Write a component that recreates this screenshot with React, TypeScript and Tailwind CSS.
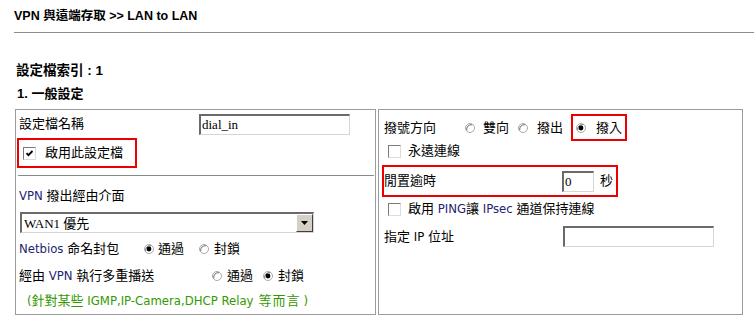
import React from 'react';

const Radio = ({ checked = false }: { checked?: boolean }) => (
  <svg width="10" height="10" viewBox="0 0 10 10" className="shrink-0">
    <circle cx="5" cy="5" r="4.5" fill="#fff" stroke="#a8a8a8" />
    <path d="M1.8 7.2 A4.5 4.5 0 0 1 7.2 1.8" fill="none" stroke="#707070" />
    {checked && <circle cx="5" cy="5" r="2.4" fill="#000" />}
  </svg>
);

const Checkbox = ({ checked = false }: { checked?: boolean }) => (
  <div className="w-[13px] h-[13px] shrink-0 bg-white border border-t-[#7a7a7a] border-l-[#7a7a7a] border-b-[#dcdcdc] border-r-[#dcdcdc] flex items-center justify-center">
    {checked && (
      <svg width="9" height="9" viewBox="0 0 9 9">
        <path d="M1.5 4.2 L3.4 6.2 L7.5 2" fill="none" stroke="#000" strokeWidth="1.8" />
      </svg>
    )}
  </div>
);

const TextBox = ({ value = '', w }: { value?: string; w: string }) => (
  <div
    className={`${w} h-[21px] bg-white border-t-2 border-l-2 border-b border-r border-t-[#6a6a6a] border-l-[#6a6a6a] border-b-[#d6d6d6] border-r-[#d6d6d6] pl-[1px] flex items-center text-[13px] leading-none`}
    style={{ fontFamily: '"Liberation Serif", "Noto Sans CJK TC", serif' }}
  >
    {value}
  </div>
);

export default function App() {
  return (
    <div
      className="w-[754px] h-[322px] bg-white text-black text-[13px] leading-[16px] overflow-hidden"
      style={{ fontFamily: '"DejaVu Sans Condensed", "Liberation Sans", "Noto Sans CJK TC", sans-serif' }}
    >
      {/* header */}
      <div
        className="ml-[14px] h-[33px] pt-[8px] border-b border-[#8c8c8c] font-bold text-[12.5px]"
        style={{ fontFamily: '"Liberation Sans", "Noto Sans CJK TC", sans-serif' }}
      >
        VPN 與遠端存取 &gt;&gt; LAN to LAN
      </div>

      <div
        className="ml-[16px] mt-[30px] font-bold text-[13.5px]"
        style={{ fontFamily: '"Liberation Sans", "Noto Sans CJK TC", sans-serif' }}
      >
        設定檔索引 : 1
      </div>
      <div
        className="ml-[17px] mt-[7px] font-bold text-[13px]"
        style={{ fontFamily: '"Liberation Sans", "Noto Sans CJK TC", sans-serif' }}
      >
        1. 一般設定
      </div>

      <div className="ml-[15px] mt-[7px] flex gap-[2px]">
        {/* left cell */}
        <div className="w-[361px] h-[206px] border border-[#9c9c9c] pl-[3px] flex flex-col">
          <div className="mt-[4px] h-[20px] flex items-center">
            <div className="w-[180px]">設定檔名稱</div>
            <TextBox value="dial_in" w="w-[151px]" />
          </div>

          <div className="mt-[4px] -ml-[2px] w-[120px] h-[30px] border-2 border-[#ee0000] pl-[4px] flex items-center">
            <Checkbox checked />
            <span className="ml-[9px]">啟用此設定檔</span>
          </div>

          <div className="mt-[7px] -ml-[1px] mr-[1px] border-t border-[#8a8a8a]" />

          <div className="mt-[12px]"><span className="text-[#1c2470]">VPN</span> 撥出經由介面</div>

          <div className="mt-[8px] ml-[1px] w-[294px] h-[21px] bg-white border-t-2 border-l-2 border-b border-r border-t-[#6a6a6a] border-l-[#6a6a6a] border-b-[#d6d6d6] border-r-[#d6d6d6] flex items-center justify-between">
            <span
              className="pl-[2px] text-[13px] leading-none"
              style={{ fontFamily: '"Liberation Serif", "Noto Sans CJK TC", serif' }}
            >
              WAN1 優先
            </span>
            <div className="w-[17px] h-[18px] bg-[#d4d0c8] border border-t-white border-l-white border-b-[#404040] border-r-[#404040] flex items-center justify-center">
              <svg width="7" height="4" viewBox="0 0 7 4">
                <polygon points="0,0 7,0 3.5,4" fill="#000" />
              </svg>
            </div>
          </div>

          <div className="mt-[8px] flex items-center">
            <div className="w-[125px]"><span className="text-[#1c2470]">Netbios</span> 命名封包</div>
            <Radio checked />
            <span className="ml-[4px]">通過</span>
            <span className="ml-[15px]"><Radio /></span>
            <span className="ml-[5px]">封鎖</span>
          </div>

          <div className="mt-[11px] flex items-center">
            <div className="w-[193px]">經由 <span className="text-[#1c2470]">VPN</span> 執行多重播送</div>
            <Radio />
            <span className="ml-[5px]">通過</span>
            <span className="ml-[10px]"><Radio checked /></span>
            <span className="ml-[5px]">封鎖</span>
          </div>

          <div className="mt-[9px] ml-[8px] text-[#339900] flex items-baseline">
            <span>(針對某些 IGMP,IP-Camera,DHCP Relay</span>
            <span className="ml-[5px] tracking-[1px]">等而言</span>
            <span className="ml-[3px]">)</span>
          </div>
        </div>

        {/* right cell */}
        <div className="w-[365px] h-[206px] border border-[#9c9c9c] pl-[3px] flex flex-col">
          <div className="mt-[4px] h-[27px] flex items-center">
            <div className="ml-[2px] w-[81px]">撥號方向</div>
            <Radio />
            <span className="ml-[8px]">雙向</span>
            <span className="ml-[9px]"><Radio /></span>
            <span className="ml-[9px]">撥出</span>
            <div className="ml-[8px] w-[56px] h-[27px] border-2 border-[#ee0000] pl-[3px] flex items-center">
              <Radio checked />
              <span className="ml-[10px]">撥入</span>
            </div>
          </div>

          <div className="mt-[2px] ml-[6px] flex items-center">
            <Checkbox />
            <span className="ml-[7px]">永遠連線</span>
          </div>

          <div className="mt-[6px] w-[236px] h-[32px] border-2 border-[#ee0000] flex items-center">
            <div className="w-[178px]">閒置逾時</div>
            <TextBox value="0" w="w-[32px]" />
            <span className="ml-[6px]">秒</span>
          </div>

          <div className="mt-[4px] ml-[6px] flex items-center">
            <Checkbox />
            <span className="ml-[7px]">啟用 <span className="text-[#1c2470]">PING</span>讓 <span className="text-[#1c2470]">IPsec</span> 通道保持連線</span>
          </div>

          <div className="mt-[9px] h-[21px] flex items-center">
            <div className="ml-[2px] w-[179px]">指定 IP 位址</div>
            <TextBox w="w-[151px]" />
          </div>
        </div>
      </div>
    </div>
  );
}
